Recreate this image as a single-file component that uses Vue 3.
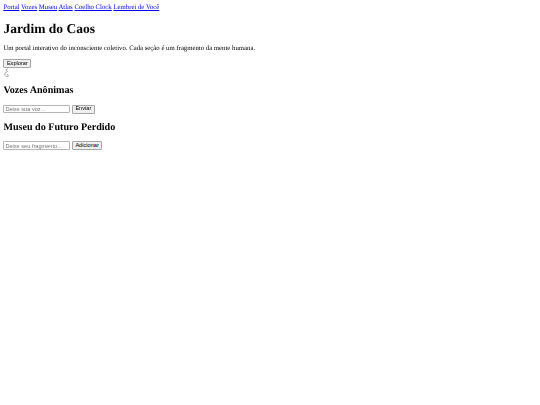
<script setup>
const links = ['Portal', 'Vozes', 'Museu', 'Atlas', 'Coelho Clock', 'Lembrei de Você']
</script>

<template>
  <div class="page">
    <nav class="nav">
      <template v-for="link in links" :key="link">
        <a href="#">{{ link }}</a>{{ ' ' }}
      </template>
    </nav>
    <h1>Jardim do Caos</h1>
    <p>Um portal interativo do inconsciente coletivo. Cada seção é um fragmento da mente humana.</p>
    <button class="btn">Explorar</button>
    <svg class="rabbit" width="7" height="9" viewBox="0 0 7 9" fill="none" stroke="#a8a8a8" stroke-width="1">
      <path d="M4.8 0.5 L2.6 2.2 L4.6 3.4 L2.2 4.8 L1.6 6.8 L3 8.4 L5.6 8 L4.2 6" />
    </svg>
    <h2>Vozes Anônimas</h2>
    <div class="form">
      <input class="field" placeholder="Deixe sua voz..." />
      <button class="btn">Enviar</button>
    </div>
    <h2>Museu do Futuro Perdido</h2>
    <div class="form">
      <input class="field" placeholder="Deixe seu fragmento..." />
      <button class="btn">Adicionar</button>
    </div>
  </div>
</template>

<style scoped>
.page {
  padding: 4px 3.375px 3.375px;
  font-family: "Liberation Serif", serif;
  font-size: 6.75px;
  line-height: 7.6px;
  color: #000;
  text-rendering: geometricPrecision;
  filter: blur(0.2px);
}
.nav a {
  color: #0000ee;
}
h1 {
  font-size: 13.5px;
  line-height: 15.6px;
  margin: 9px 0;
}
h2 {
  font-size: 10.125px;
  line-height: 11.5px;
  margin: 8px 0;
}
p {
  margin: 7px 0 6.25px;
}
.btn {
  display: block;
  box-sizing: border-box;
  height: 9px;
  font-family: "Liberation Sans", sans-serif;
  font-size: 5.625px;
  line-height: 1;
  padding: 0 2.5px;
  color: #000;
  background: #efefef;
  border: 1px solid #a6a6a6;
  border-radius: 1px;
}
.rabbit {
  display: block;
}
.form {
  display: flex;
  gap: 1.5px;
  align-items: center;
}
.field {
  box-sizing: border-box;
  width: 67px;
  height: 8.5px;
  padding: 0 1px;
  font-family: "Liberation Sans", sans-serif;
  font-size: 5.625px;
  background: #fff;
  border: 1px solid #b4b4b4;
  border-radius: 1px;
}
</style>
